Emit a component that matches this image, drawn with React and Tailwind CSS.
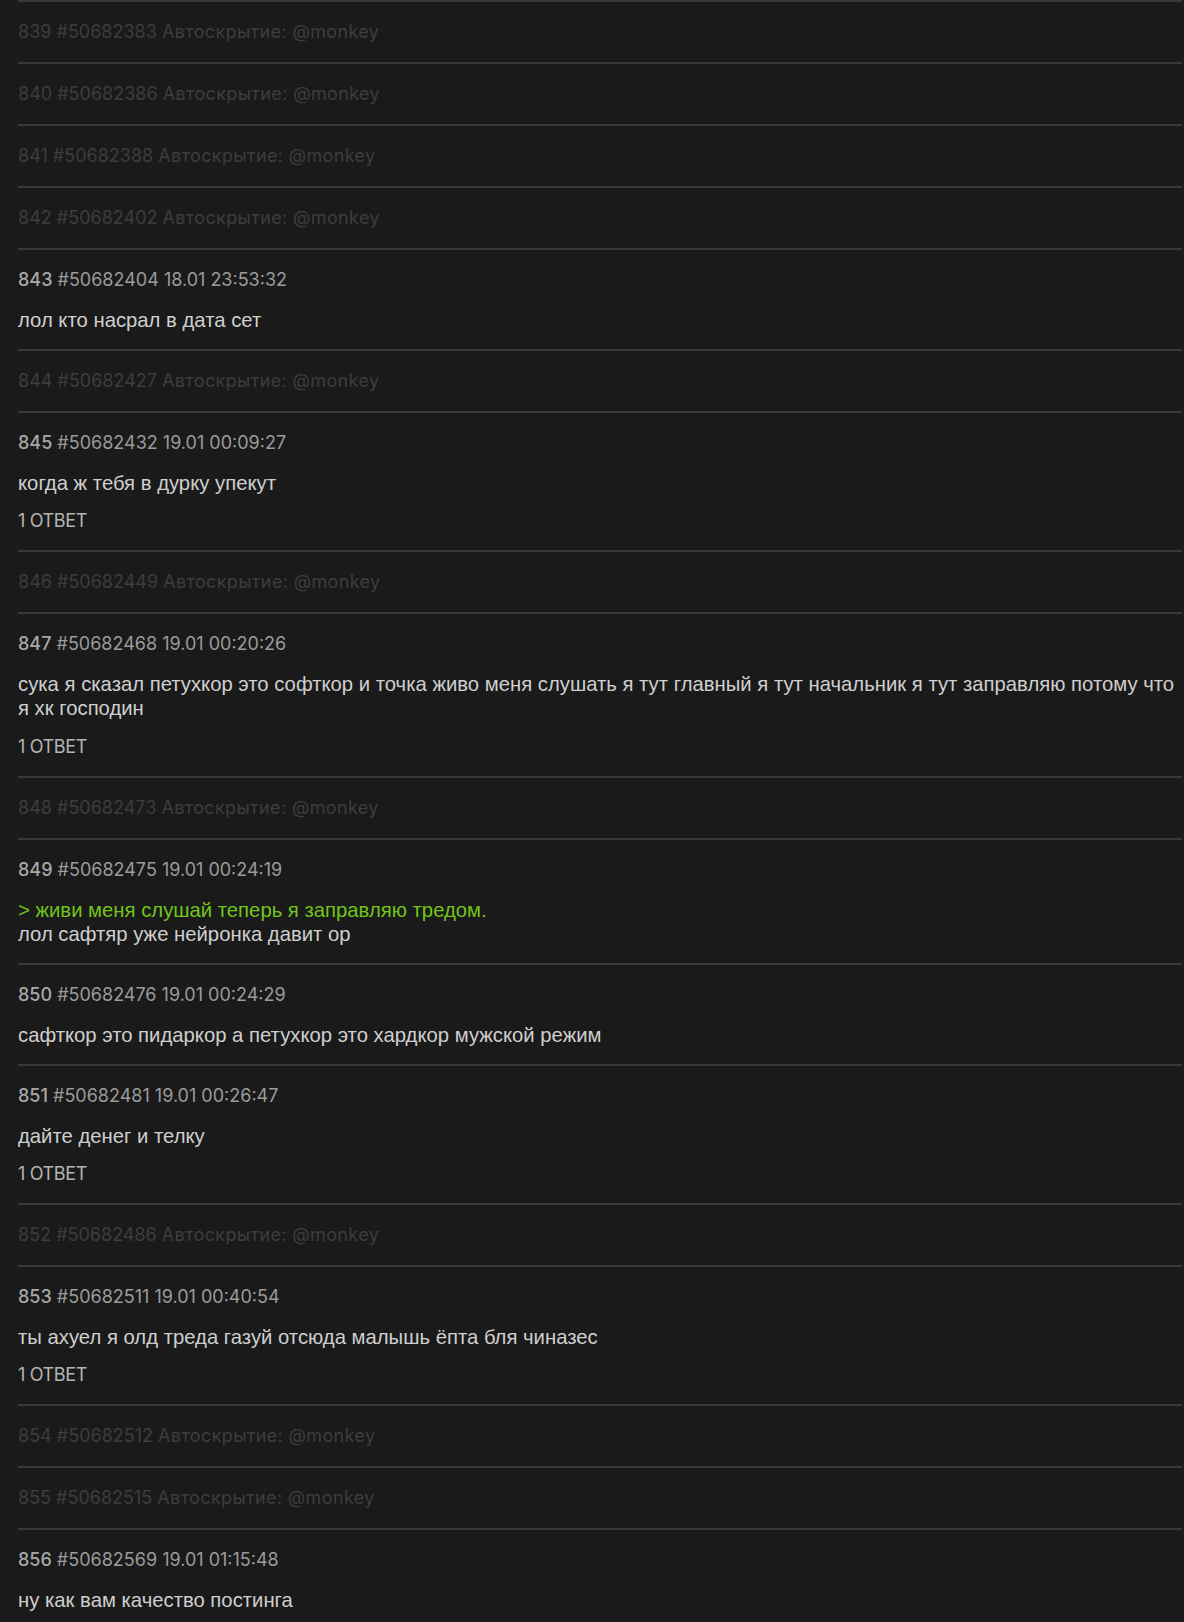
import React from "react";

const posts = [
  { n: 839, id: "50682383", hidden: true },
  { n: 840, id: "50682386", hidden: true },
  { n: 841, id: "50682388", hidden: true },
  { n: 842, id: "50682402", hidden: true },
  { n: 843, id: "50682404", date: "18.01 23:53:32", text: ["лол кто насрал в дата сет"] },
  { n: 844, id: "50682427", hidden: true },
  { n: 845, id: "50682432", date: "19.01 00:09:27", text: ["когда ж тебя в дурку упекут"], replies: 1 },
  { n: 846, id: "50682449", hidden: true },
  {
    n: 847,
    id: "50682468",
    date: "19.01 00:20:26",
    text: [
      "сука я сказал петухкор это софткор и точка живо меня слушать я тут главный я тут начальник я тут заправляю потому что я хк господин",
    ],
    replies: 1,
  },
  { n: 848, id: "50682473", hidden: true },
  {
    n: 849,
    id: "50682475",
    date: "19.01 00:24:19",
    quote: "> живи меня слушай теперь я заправляю тредом.",
    text: ["лол сафтяр уже нейронка давит ор"],
  },
  { n: 850, id: "50682476", date: "19.01 00:24:29", text: ["сафткор это пидаркор а петухкор это хардкор мужской режим"] },
  { n: 851, id: "50682481", date: "19.01 00:26:47", text: ["дайте денег и телку"], replies: 1 },
  { n: 852, id: "50682486", hidden: true },
  {
    n: 853,
    id: "50682511",
    date: "19.01 00:40:54",
    text: ["ты ахуел я олд треда газуй отсюда малышь ёпта бля чиназес"],
    replies: 1,
  },
  { n: 854, id: "50682512", hidden: true },
  { n: 855, id: "50682515", hidden: true },
  { n: 856, id: "50682569", date: "19.01 01:15:48", text: ["ну как вам качество постинга"] },
];

const meta = { fontFamily: "Inter, 'Noto Sans', sans-serif" };
const body = { fontFamily: "'Liberation Sans', Arial, sans-serif" };

const Post = ({ post }) => {
  if (post.hidden) {
    return (
      <div className="border-t-2 border-[#3a3a3a] py-[18px]">
        <div className="text-[18px] leading-6 text-[#3d3d3d]" style={meta}>
          {post.n} #{post.id} <span className="tracking-[0.02em]">Автоскрытие: @monkey</span>
        </div>
      </div>
    );
  }

  return (
    <div className="border-t-2 border-[#3a3a3a] pt-[18px] pb-[17px]">
      <div className="text-[18px] leading-6 text-[#9b9b9b]" style={meta}>
        <span className="font-medium text-[#a8a8a8]">{post.n}</span> #{post.id} {post.date}
      </div>
      <div className="mt-4 text-[20.3px] leading-6 text-[#cfcfcf]" style={body}>
        {post.quote && <div className="text-[#72c41a]">{post.quote}</div>}
        {post.text.map((t, i) => (
          <div key={i}>{t}</div>
        ))}
      </div>
      {post.replies && (
        <div className="mt-[14.25px] text-[18px] leading-6 tracking-[-0.02em] text-[#b4b4b4]" style={meta}>
          {post.replies} ОТВЕТ
        </div>
      )}
    </div>
  );
};

export default function App() {
  return (
    <div className="min-h-[1622px] w-full bg-[#1a1a1a]">
      <div className="ml-[18px] mr-[2px]">
        {posts.map((post) => (
          <Post key={post.n} post={post} />
        ))}
      </div>
    </div>
  );
}
